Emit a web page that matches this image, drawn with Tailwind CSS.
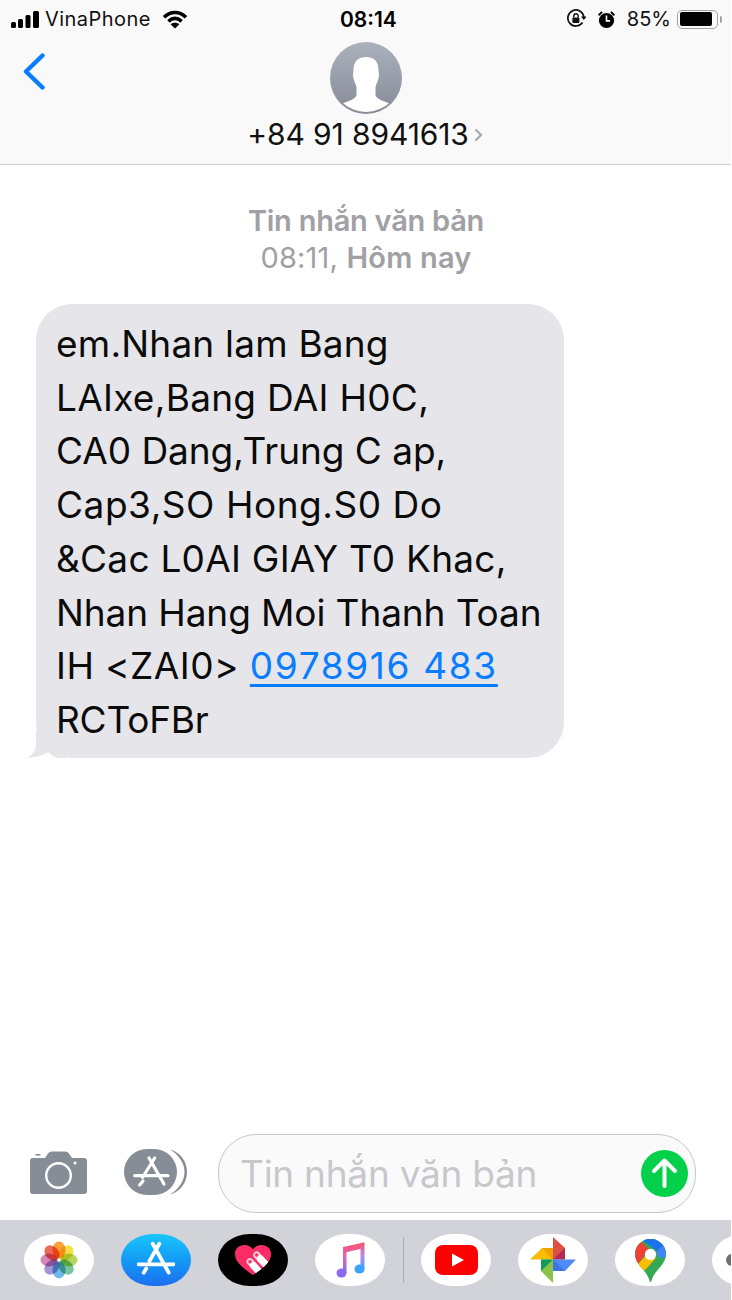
<!DOCTYPE html>
<html lang="vi">
<head>
<meta charset="utf-8">
<script src="https://cdn.jsdelivr.net/npm/@tailwindcss/browser@4"></script>
</head>
<body class="bg-white">
<div class="w-[732px] h-[1300px] flex flex-col bg-white overflow-hidden font-['Inter','Roboto',sans-serif] text-black">
  <!-- Header -->
  <header class="w-[731px] h-[165px] shrink-0 bg-[#f9f9f9] border-b border-[#d2d2d4] relative">
    <div class="h-[38px] flex items-center justify-between pl-[11px] pr-[9px]">
      <div class="flex items-center gap-[6px] w-[250px]">
        <svg width="28" height="17" viewBox="0 0 28 17" fill="#000"><rect x="0" y="11" width="5" height="6" rx="1.5"/><rect x="7" y="8" width="5" height="9" rx="1.5"/><rect x="14.5" y="4" width="5" height="13" rx="1.5"/><rect x="22" y="0" width="6" height="17" rx="1.5"/></svg>
        <span class="text-[20px] leading-none tracking-[0.45px] text-[#111]">VinaPhone</span>
        <svg class="ml-[5px]" width="26" height="19" viewBox="0 0 26 19" fill="none" stroke="#000" stroke-width="3.6"><path d="M2 7.2C8.6 .9 17.4 .9 24 7.2"/><path d="M6.4 11.3C10.6 7.6 15.4 7.6 19.6 11.3"/><path fill="#000" stroke="none" d="M13 18.5 8.6 14.2C11.2 12.2 14.8 12.2 17.4 14.2Z"/></svg>
      </div>
      <span class="absolute left-[340px] text-[21px] leading-none font-semibold">08:14</span>
      <div class="flex items-center">
        <svg width="20" height="20" viewBox="0 0 20 20" fill="none" stroke="#111" stroke-width="1.7"><path d="M16.5 13.5A8 8 0 1 1 17.8 8"/><path fill="#111" stroke="none" d="M15 7.5h5.5L17.8 11Z"/><rect x="6.4" y="8.4" width="7" height="5.6" rx="1" fill="#111" stroke="none"/><path stroke-width="1.4" d="M7.8 8.5V7a2.2 2.2 0 0 1 4.4 0v1.500"/></svg>
        <svg class="ml-[11px]" width="19" height="19" viewBox="0 0 19 19" fill="#000"><circle cx="9.5" cy="10.5" r="7.6"/><path d="M1 4.6 4.4 1.2 5.8 2.4 2.2 6Z M18 4.6 14.6 1.2 13.2 2.4 16.8 6Z"/><path d="M9.5 5.5v5.4h3.6" fill="none" stroke="#f9f9f9" stroke-width="1.6"/></svg>
        <span class="ml-[11px] text-[20px] leading-none text-[#111]">85%</span>
        <div class="ml-[6px] w-[41px] h-[19px] rounded-[5px] border-[1.5px] border-[#a2a2a4] p-[1.5px]"><div class="h-full w-[32px] bg-black rounded-[2px]"></div></div>
        <div class="ml-[2px] w-[2px] h-[7px] bg-[#a2a2a4] rounded-r-sm"></div>
      </div>
    </div>
    <div class="absolute left-[23px] top-[53px]">
      <svg width="22" height="37" viewBox="0 0 22 37" fill="none" stroke="#0a7cff" stroke-width="4.4" stroke-linecap="round" stroke-linejoin="round"><path d="M19.5 2.5 3 18.5 19.5 34.5"/></svg>
    </div>
    <div class="flex flex-col items-center mt-[4px]">
      <svg width="72" height="72" viewBox="0 0 72 72">
        <defs>
          <linearGradient id="av" x1="0" y1="0" x2="0" y2="1"><stop offset="0" stop-color="#aab0bc"/><stop offset="1" stop-color="#868b97"/></linearGradient>
          <clipPath id="avc"><circle cx="36" cy="35.5" r="34.5"/></clipPath>
        </defs>
        <circle cx="36" cy="36" r="36" fill="url(#av)"/>
        <path clip-path="url(#avc)" fill="#fff" d="M36 15C27 15 24 20 23.500 27L23 33C23 37 25 40 26.500 45L26.500 53C26 56 22 58 15 60.500C11 62 8 63.500 5 66V72H67V66C64 63.500 61 62 57 60.500C50 58 46 56 45.500 53L45.500 45C47 40 49 37 49 33L48.500 27C48 20 45 15 36 15Z"/>
      </svg>
      <div class="flex items-center mt-[1px] -ml-[1px]">
        <span class="text-[30px] leading-[38px] tracking-[-0.1px] text-[#111]">+84 91 8941613</span>
        <svg class="ml-[5px] mt-[2px]" width="9" height="14" viewBox="0 0 9 14" fill="none" stroke="#a4a8b2" stroke-width="2.2"><path d="M1.500 1.500 7 7 1.500 12.500"/></svg>
      </div>
    </div>
  </header>

  <!-- Conversation -->
  <main class="flex-1 min-h-0">
    <div class="pt-[38px] text-center text-[#a0a0a5] text-[29px] leading-[36.500px]">
      <div class="font-semibold tracking-[-0.25px]">Tin nhắn văn bản</div>
      <div class="tracking-[0.2px]"><span>08:11,</span> <span class="font-semibold">Hôm nay</span></div>
    </div>
    <div class="relative ml-[36px] mt-[28px] w-[528px] h-[454px] rounded-[36px] bg-[#e5e5ea] pl-[20px] pt-[13px] text-[37px] leading-[53.7px] text-[#0b0b0b]">
      <svg class="absolute left-[-10px] bottom-0" width="40" height="28" viewBox="0 0 40 28" fill="#e5e5ea"><path d="M10 0V17C9 22 6 26 .5 27.500C8 28 16 26 22.300 22.300C25 25 28 27 32 28H40V0Z"/></svg>
      <div class="relative whitespace-nowrap">
        <div class="tracking-[0.2px]">em.Nhan lam Bang</div>
        <div class="tracking-[0.28px]">LAIxe,Bang DAI H0C,</div>
        <div class="tracking-[-0.05px]">CA0 Dang,Trung C ap,</div>
        <div class="tracking-[0.54px]">Cap3,SO Hong.S0 Do</div>
        <div class="tracking-[0.25px]">&amp;Cac L0AI GIAY T0 Khac,</div>
        <div class="tracking-[-0.1px]">Nhan Hang Moi Thanh Toan</div>
        <div class="tracking-[0.45px]">IH &lt;ZAI0&gt; <span class="text-[#0a7cff] tracking-[1.65px] underline decoration-[3px] underline-offset-[5px]">0978916 483</span></div>
        <div class="tracking-[-0.2px]">RCToFBr</div>
      </div>
    </div>
  </main>

  <!-- Composer -->
  <div class="h-[86px] shrink-0 flex items-start pl-[30px] w-[731px]">
    <svg class="mt-[17px]" width="57" height="43" viewBox="0 0 57 43"><path fill="#868d96" d="M3 7H15L18 2.500Q19.500 .5 22 .5H35Q37.500 .5 39 2.500L42 7H54Q57 7 57 10V40Q57 43 54 43H3Q0 43 0 40V10Q0 7 3 7Z"/><rect x="5.500" y="3" width="5" height="1.500" fill="#868d96"/><circle cx="28.500" cy="24.500" r="12.300" fill="none" stroke="#fff" stroke-width="2.400"/><circle cx="45" cy="12" r="1.500" fill="#fff"/></svg>
    <svg class="ml-[37px] mt-[15px]" width="63" height="46" viewBox="0 0 63 46">
      <rect x="0" y="0" width="53" height="46" rx="23" fill="#868d96"/>
      <path fill="#868d96" d="M46 .5C58 4 63 14 63 23C63 32 58 42 46 45.500C55 40 60.500 32 60.500 23C60.500 14 55 6 46 .5Z"/>
      <g fill="none" stroke="#fff" stroke-width="3.200" stroke-linecap="round"><path d="M30.700 9 18.500 28.500M19 32 15.700 36M25 9 40 35M10.700 26.700H44"/></g>
    </svg>
    <div class="ml-[31px] w-[478px] h-[79px] rounded-[38px] border-[1.5px] border-[#c6c6cd] bg-[#fafafa] flex items-center justify-between pl-[21px] pr-[7px]">
      <span class="text-[37px] leading-none text-[#c7c7cc] tracking-[-0.25px]">Tin nhắn văn bản</span>
      <svg width="47" height="47" viewBox="0 0 47 47" class="-mt-[1px]"><circle cx="23.500" cy="23.500" r="23.500" fill="#04d04a"/><path fill="none" stroke="#fff" stroke-width="4" stroke-linecap="round" stroke-linejoin="round" d="M23.500 36V11.500M13 21 23.500 10.500 34 21"/></svg>
    </div>
  </div>

  <!-- App drawer -->
  <div class="h-[80px] shrink-0 w-[731px] bg-[#d1d3d8] flex items-center gap-[27px] pl-[24px] overflow-hidden">
    <div class="w-[70px] h-[52px] shrink-0 rounded-[32px/26px] bg-white flex items-center justify-center">
      <svg width="38" height="38" viewBox="-19 -19 38 38" class="isolate">
        <ellipse class="mix-blend-multiply" cy="-10" rx="6.500" ry="8.500" fill="#f9a13a"/>
        <ellipse class="mix-blend-multiply" cy="-10" rx="6.500" ry="8.500" fill="#f8e04a" transform="rotate(45)"/>
        <ellipse class="mix-blend-multiply" cy="-10" rx="6.500" ry="8.500" fill="#b2d75e" transform="rotate(90)"/>
        <ellipse class="mix-blend-multiply" cy="-10" rx="6.500" ry="8.500" fill="#78c59c" transform="rotate(135)"/>
        <ellipse class="mix-blend-multiply" cy="-10" rx="6.500" ry="8.500" fill="#70b9e6" transform="rotate(180)"/>
        <ellipse class="mix-blend-multiply" cy="-10" rx="6.500" ry="8.500" fill="#a496d2" transform="rotate(225)"/>
        <ellipse class="mix-blend-multiply" cy="-10" rx="6.500" ry="8.500" fill="#d487b6" transform="rotate(270)"/>
        <ellipse class="mix-blend-multiply" cy="-10" rx="6.500" ry="8.500" fill="#ee6a58" transform="rotate(315)"/>
        <circle r="1" fill="#fff"/>
      </svg>
    </div>
    <div class="w-[70px] h-[52px] shrink-0 rounded-[32px/26px] bg-gradient-to-b from-[#1bc5fb] to-[#1d6eee] flex items-center justify-center">
      <svg width="38" height="38" viewBox="0 0 38 38" fill="none" stroke="#fff" stroke-width="3.800" stroke-linecap="round"><path d="M22.300 2.700 12.500 20M9.300 27.500 6.700 31.700M15.700 2.700 31.700 31.700M1.300 23.300H36.700"/></svg>
    </div>
    <div class="w-[70px] h-[52px] shrink-0 rounded-[32px/26px] bg-black flex items-center justify-center">
      <svg width="36" height="30" viewBox="0 0 36 30">
        <defs><clipPath id="ht"><path d="M18 30C6 22 0 16 0 9C0 3.500 4 0 9.500 0C13 0 16 1.500 18 4.500C20 1.500 23 0 26.500 0C32 0 36 3.500 36 9C36 16 30 22 18 30Z"/></clipPath></defs>
        <path fill="#fb2c66" d="M18 30C6 22 0 16 0 9C0 3.500 4 0 9.500 0C13 0 16 1.500 18 4.500C20 1.500 23 0 26.500 0C32 0 36 3.500 36 9C36 16 30 22 18 30Z"/>
        <g clip-path="url(#ht)" fill="none" stroke-linecap="round" stroke-width="7">
          <path stroke="#f6d3d9" d="M21.700 10 35 24"/>
          <path stroke="#f6d3d9" d="M15 16.700 28 31"/>
          <path stroke="#fff" d="M25.500 14 35 24"/>
          <path stroke="#fff" d="M18.500 20.500 28 31"/>
        </g>
        <circle cx="21.700" cy="10" r="1.700" fill="#fb2c66"/>
        <circle cx="15" cy="16.700" r="1.700" fill="#fb2c66"/>
      </svg>
    </div>
    <div class="w-[70px] h-[52px] shrink-0 rounded-[32px/26px] bg-white flex items-center justify-center">
      <svg width="29" height="36" viewBox="0 0 29 36">
        <defs><linearGradient id="mu" x1="0" y1="0" x2="0" y2="1"><stop offset="0" stop-color="#f9536a"/><stop offset=".45" stop-color="#e264b8"/><stop offset="1" stop-color="#7f6cf2"/></linearGradient><linearGradient id="mu2" x1="0" y1="0" x2="0" y2="1"><stop offset="0" stop-color="#f9536a"/><stop offset=".5" stop-color="#b88bee"/><stop offset="1" stop-color="#3ca4ff"/></linearGradient></defs>
        <path fill="url(#mu)" d="M7 5 28 .5V6L10.500 10.200V31L7 31Z"/>
        <ellipse cx="5.500" cy="31" rx="5" ry="4.600" fill="#8a6cf0"/>
        <path fill="url(#mu2)" d="M24.500 1.300 28.500 .5V27H24.500Z"/>
        <ellipse cx="23.500" cy="27" rx="5" ry="4.600" fill="#3ca4ff"/>
      </svg>
    </div>
    <div class="w-px h-[46px] bg-[#a9acb1] shrink-0 -ml-[9px] -mr-[10px]"></div>
    <div class="w-[70px] h-[52px] shrink-0 rounded-[32px/26px] bg-white flex items-center justify-center">
      <svg width="43" height="30" viewBox="0 0 43 30"><rect width="43" height="30" rx="8" fill="#f00"/><path fill="#fff" d="M17 8.500 29 15 17 21.500Z"/></svg>
    </div>
    <div class="w-[70px] h-[52px] shrink-0 rounded-[32px/26px] bg-white flex items-center justify-center">
      <svg width="46" height="46" viewBox="0 0 46 46">
        <path fill="#fbbc04" d="M0 22.500 12 11H23V22.500Z"/>
        <path fill="#ea8f0a" opacity=".6" d="M12 11H23V22.500Z"/>
        <path fill="#dd5144" d="M23 0 35 11V22.500H23Z"/>
        <path fill="#a61c5c" opacity=".75" d="M35 11V22.500H23Z"/>
        <path fill="#4d8cf5" d="M46 22.500 35 34H23V22.500Z"/>
        <path fill="#2a62c9" opacity=".5" d="M35 34H23V22.500Z"/>
        <path fill="#8bc34a" d="M23 46 11 34V22.500H23Z"/>
        <path fill="#0f9d58" d="M11 22.500H23L11 34Z"/>
      </svg>
    </div>
    <div class="w-[70px] h-[52px] shrink-0 rounded-[32px/26px] bg-white flex items-center justify-center">
      <svg width="31" height="45" viewBox="0 0 33 46">
        <defs><clipPath id="pin"><path d="M16.500 0C7.400 0 0 7.300 0 16.400C0 21 2 24.500 5 28.500C9 33.500 14 38 16 46H17C19 38 24 33.500 28 28.500C31 24.500 33 21 33 16.400C33 7.300 25.600 0 16.500 0Z"/></clipPath></defs>
        <g clip-path="url(#pin)">
          <rect width="33" height="46" fill="#34a853"/>
          <path fill="#1a73e8" d="M5 0H33V14L25 14 10 3Z"/>
          <path fill="#4285f4" d="M22 14 33 5V20H26Z"/>
          <path fill="#ea4335" d="M0 7 7 3 15 11 3 27 0 24Z"/>
          <path fill="#fbbc04" d="M3 27 15 14 22 21 8 36Z"/>
        </g>
        <circle cx="16.500" cy="16.500" r="6" fill="#fff"/>
      </svg>
    </div>
    <div class="w-[70px] h-[52px] shrink-0 rounded-[32px/26px] bg-white flex items-center pl-[14px]">
      <div class="w-[12px] h-[12px] rounded-full bg-[#6d6f75]"></div>
    </div>
  </div>
</div>
</body>
</html>
